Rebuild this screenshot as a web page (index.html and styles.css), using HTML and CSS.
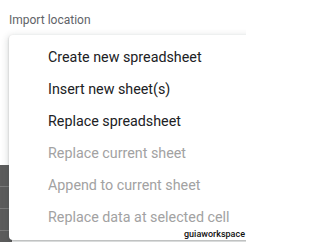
FILE: index.html
```html
<!DOCTYPE html>
<html>
<head>
<meta charset="utf-8">
<link rel="stylesheet" href="styles.css">
</head>
<body>
<div class="page">
  <div class="label">Import location</div>
  <div class="backdrop">
    <div class="row"></div>
    <div class="row"></div>
    <div class="row"></div>
    <div class="row"></div>
  </div>
  <ul class="menu">
    <li class="item">Create new spreadsheet</li>
    <li class="item">Insert new sheet(s)</li>
    <li class="item">Replace spreadsheet</li>
    <li class="item disabled">Replace current sheet</li>
    <li class="item disabled">Append to current sheet</li>
    <li class="item disabled">Replace data at selected cell</li>
  </ul>
  <div class="watermark">guiaworkspace</div>
</div>
</body>
</html>
```
FILE: styles.css
```css
html, body {
  margin: 0;
  padding: 0;
  background: #ffffff;
  overflow: hidden;
}
.page {
  position: relative;
  width: 246px;
  height: 242px;
  overflow: hidden;
  font-family: Roboto, "Noto Sans", sans-serif;
}
.label {
  padding: 12px 0 0 9px;
  font-size: 12px;
  line-height: 16px;
  color: #5f6368;
}
.backdrop {
  margin-top: 137px;
  width: 12px;
  height: 77px;
  background: #5c5c5c;
}
.row {
  height: 21px;
  border-bottom: 1px solid #7b7b7b;
}
.menu {
  position: absolute;
  left: 9px;
  top: 35px;
  width: 260px;
  height: 205px;
  margin: 0;
  padding: 6px 0 0 0;
  list-style: none;
  background: #ffffff;
  border-radius: 4px;
  box-shadow: 0 1px 2px rgba(60,64,67,0.3), 0 2px 6px 2px rgba(60,64,67,0.15);
  box-sizing: border-box;
}
.item {
  height: 32px;
  line-height: 32px;
  padding-left: 39px;
  font-size: 14.3px;
  color: #202124;
  white-space: nowrap;
}
.item.disabled {
  color: #a2a2a2;
}
.watermark {
  position: absolute;
  right: 1px;
  bottom: 2px;
  font-size: 9px;
  font-weight: 500;
  line-height: 11px;
  color: #111111;
  background: #ffffff;
}
```
